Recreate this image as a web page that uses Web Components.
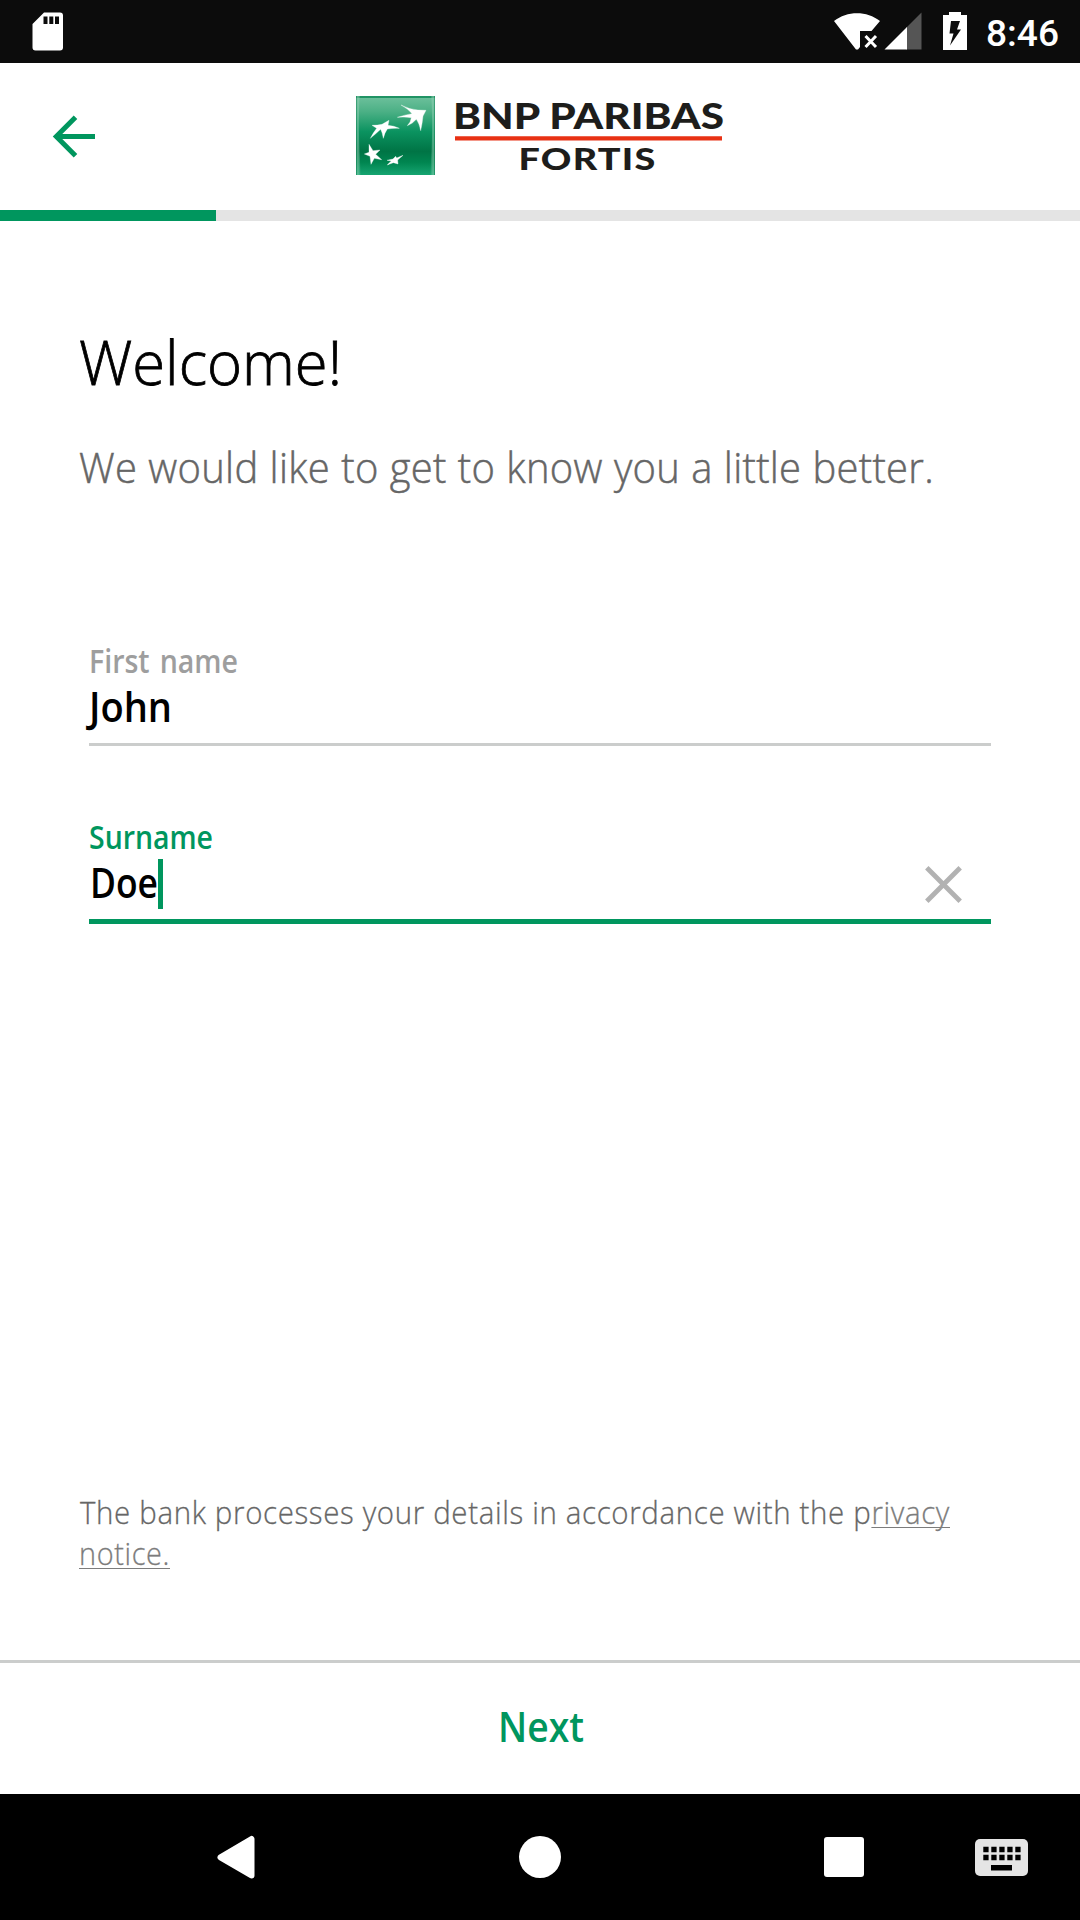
<!DOCTYPE html>
<html lang="en">
<head>
<meta charset="utf-8">
<title>Welcome</title>
<style>
body{margin:0;background:#fff;font-family:"Open Sans","Noto Sans",sans-serif}
</style>
</head>
<body>
<onboarding-app></onboarding-app>
<script>
class Base extends HTMLElement{
  constructor(){super();this.attachShadow({mode:"open"}).innerHTML=this.view();}
}
/* One line of text, condensed or widened to the given width. */
customElements.define("fit-text",class extends Base{
  view(){return `<style>:host{display:block;white-space:nowrap}span{display:inline-block;transform-origin:0 50%;vertical-align:top}</style><span><slot></slot></span>`;}
  connectedCallback(){
    const s=this.shadowRoot.querySelector("span"),w=+this.getAttribute("width");
    const fit=()=>{s.style.transform="none";const n=s.getBoundingClientRect().width;if(n)s.style.transform=`scaleX(${w/n})`;};
    this.style.width=w+"px";
    fit();document.fonts.ready.then(fit);
  }
});
customElements.define("status-bar",class extends Base{
  view(){return `<style>
:host{display:flex;height:63px;background:#0c0c0c;align-items:flex-start;box-sizing:border-box;padding:12px 21px 0 32px}
svg{display:block;flex:none}.sp{flex:1}
.t{font:500 37px/44px Roboto,sans-serif;color:#fff}
</style>
<svg width="31" height="39" viewBox="0 0 31 39"><path fill="#fff" d="M12 .5H28a3 3 0 0 1 3 3V35.500a3 3 0 0 1-3 3H3.500a3 3 0 0 1-3-3V12Z"/><path fill="#0c0c0c" d="M11.500 4.500h4v7.500h-4zM17.300 4.500h4v7.500h-4zM23 4.500h4v7.500h-4z"/></svg>
<div class="sp"></div>
<svg width="46" height="39" viewBox="0 0 46 39"><path fill="#fff" d="M0 9C13-1.500 33-1.500 46 9L37.500 19H26V35L24 37.500H22Z"/><path stroke="#fff" stroke-width="3" d="M31.500 24 42 35M42 24 31.500 35"/></svg>
<svg style="margin-left:4px" width="38" height="38" viewBox="0 0 38 38"><path fill="#555" d="M37.500 .5V37.500H22V16Z"/><path fill="#fff" d="M.5 37.500 23 15V37.500Z"/></svg>
<svg style="margin:0 19px 0 21px" width="24" height="38" viewBox="0 0 24 38"><path fill="#fff" d="M6 0H18V3H24V38H0V3H6Z"/><path fill="#0c0c0c" d="M8 9H17L14 17.500H18L7 33.500 10.500 21.500H6.500Z"/></svg>
<fit-text class="t" width="73">8:46</fit-text>`;}
});
customElements.define("bank-logo",class extends Base{
  view(){return `<style>:host{display:flex;align-items:center;gap:16px}svg{display:block;overflow:visible}</style>
<svg width="79" height="79" viewBox="33 33 237 237">
<defs><linearGradient id="g" x1="0" y1="0" x2="0" y2="1"><stop offset="0" stop-color="#6fc19d"/><stop offset=".2" stop-color="#4bb085"/><stop offset=".45" stop-color="#0b9360"/><stop offset=".7" stop-color="#007445"/><stop offset=".84" stop-color="#008550"/><stop offset="1" stop-color="#16a571"/></linearGradient>
<linearGradient id="s" x1="0" y1="0" x2="1" y2="0"><stop offset="0" stop-color="#007a49" stop-opacity=".7"/><stop offset=".35" stop-color="#9bd5ba" stop-opacity=".55"/><stop offset="1" stop-color="#9bd5ba" stop-opacity="0"/></linearGradient></defs>
<path fill="url(#g)" d="M33 33H270V270H33Z"/>
<path fill="#00804d" opacity=".7" d="M33 33H270V39H33Z"/>
<path fill="url(#s)" d="M33 33H45Q37 120 48 270H33Z"/>
<path fill="url(#s)" transform="translate(303 0) scale(-1 1)" d="M33 33H45Q37 120 48 270H33Z"/>
<g fill="#fff" stroke="#fff" stroke-width="1"><path d="M168 60Q195 74 219 75L243 76 234 93Q232 115 227 137 223 115 214 103 202 117 187 122 198 110 199 98 178 95 157 97 181 89 201 86 190 72 168 60Z"/>
<path d="M132 106 129 121Q147 122 163 130 143 129 127 132 118 145 115 160 112 142 107 133 92 147 76 160 86 141 95 130L81 121Q98 121 111 118Z"/>
<path d="M72 178 84 197 105 195 92 208 110 224 88 220 78 238 75 214 58 207 72 202Z"/>
<path d="M174 211 158 225 159 237 145 233 126 240 139 228 126 226 144 222 152 214 155 219Z"/></g></svg>
<svg width="276" height="79" viewBox="-3 0 276 79" fill="#1d1d1b" font-family="Lato" font-weight="900">
<text x="-1" y="33" font-size="36" textLength="271" lengthAdjust="spacingAndGlyphs">BNP PARIBAS</text>
<path fill="#e83114" d="M1 40.300H268V44.500H1Z"/>
<text x="64.500" y="73.500" font-size="30.500" textLength="138" letter-spacing="1" lengthAdjust="spacingAndGlyphs">FORTIS</text></svg>`;}
});
customElements.define("app-header",class extends Base{
  view(){return `<style>
:host{display:grid;grid-template-columns:1fr auto 1fr;height:147px;align-items:center}
svg{display:block;margin:0 0 0 52px}bank-logo{margin:0 -2px 2px 0}
</style>
<svg width="44" height="44" viewBox="0 0 44 44" fill="none" stroke="#00965e" stroke-width="5"><path d="M5 21.500H43M23.500 2.300 4.300 21.500 23.500 40.700"/></svg>
<bank-logo></bank-logo><span></span>`;}
});
customElements.define("step-progress",class extends Base{
  view(){return `<style>:host{display:block;height:11px;background:#e4e4e4}div{height:100%;width:20%;background:#00965e}</style><div></div>`;}
});
customElements.define("text-field",class extends Base{
  view(){return `<style>
:host{display:block;height:100px;border-bottom:3px solid #cbcdcc;color:#000}
:host([active]){border-bottom:5px solid #00965e}
.l{font-weight:600;font-size:32px;line-height:36px;color:#9e9e9e;height:36px;word-spacing:3px}
:host([active]) .l{color:#00965e}
.r{display:flex;height:54px;font-weight:600;font-size:42px;line-height:54px}
:host([active]) .r{padding-left:1px}
.c{display:none;width:5px;height:50px;margin-top:4px;background:#00965e}
svg{display:none;margin:11px 28px 0 auto}
:host([active]) .c,:host([active]) svg{display:block}
</style>
<div class="l"><slot name="label"></slot></div>
<div class="r"><slot></slot><div class="c"></div><svg width="38" height="38" viewBox="0 0 38 38" stroke="#b2b2b2" stroke-width="4.800"><path d="M1.800 1.800 35.200 35.200M35.200 1.800 1.800 35.200"/></svg></div>`;}
});
customElements.define("nav-bar",class extends Base{
  view(){return `<style>
:host{display:flex;height:126px;background:#000;align-items:center;box-sizing:border-box;padding:0 52px 0 216px}svg{display:block;flex:none}
</style>
<svg width="40" height="44" viewBox="0 0 40 44"><path fill="#fff" stroke="#fff" stroke-width="6" stroke-linejoin="round" d="M4.500 22.300 35.500 4V40.500Z"/></svg>
<svg style="margin-left:263px" width="42" height="44" viewBox="0 0 42 44"><circle cx="21" cy="22" r="21" fill="#fff"/></svg>
<svg style="margin-left:263px" width="40" height="40" viewBox="0 0 40 40"><rect width="40" height="40" rx="3" fill="#fff"/></svg>
<svg style="margin:1px 0 0 auto" width="53" height="37" viewBox="0 0 53 37"><rect width="53" height="37" rx="5" fill="#e5e5e5"/><path stroke="#000" stroke-width="5.300" stroke-dasharray="5.300 2.700" d="M8.300 10.500H46M8.300 18.500H46"/><path fill="#000" d="M16 26H37V31.500H16Z"/></svg>`;}
});
customElements.define("onboarding-app",class extends Base{
  view(){return `<style>
:host{display:flex;flex-direction:column;height:1920px;width:1080px;background:#fff}
main{flex:1;display:flex;flex-direction:column;padding:0 79px}
h1,p{margin:0;font-weight:300}
h1{font-size:61px;line-height:80px;margin-top:101px;color:#000;-webkit-text-stroke:.8px currentColor}
.sub{font-size:42px;line-height:56px;margin-top:37px;color:#666;letter-spacing:.3px;word-spacing:.5px;-webkit-text-stroke:.5px currentColor}
form{margin:148px 10px 0;display:flex;flex-direction:column;gap:73px}
.note{font-size:32px;line-height:41px;color:#666;margin:auto 0 87px;letter-spacing:.7px;-webkit-text-stroke:.3px currentColor}
.first{margin-left:1px}
a{color:#7c7c7c;text-decoration:underline;text-decoration-thickness:1px;text-underline-offset:3px;text-decoration-skip-ink:none}
footer{box-sizing:border-box;height:134px;border-top:3px solid #cbcdcc;display:flex;align-items:center;justify-content:center;font-size:42px;line-height:56px;font-weight:600;color:#00965e;padding:0 0 5px 2px}
</style>
<status-bar></status-bar><app-header></app-header><step-progress></step-progress>
<main>
<h1><fit-text width="263">Welcome!</fit-text></h1>
<p class="sub"><fit-text width="855">We would like to get to know you a little better.</fit-text></p>
<form>
<text-field><fit-text slot="label" width="149">First name</fit-text><fit-text width="83">John</fit-text></text-field>
<text-field active><fit-text slot="label" width="124">Surname</fit-text><fit-text width="68">Doe</fit-text></text-field>
</form>
<p class="note"><fit-text class="first" width="870">The bank processes your details in accordance with the p<a>rivacy</a></fit-text><fit-text width="91"><a>notice.</a></fit-text></p>
</main>
<footer><fit-text width="86">Next</fit-text></footer>
<nav-bar></nav-bar>`;}
});
</script>
</body>
</html>
